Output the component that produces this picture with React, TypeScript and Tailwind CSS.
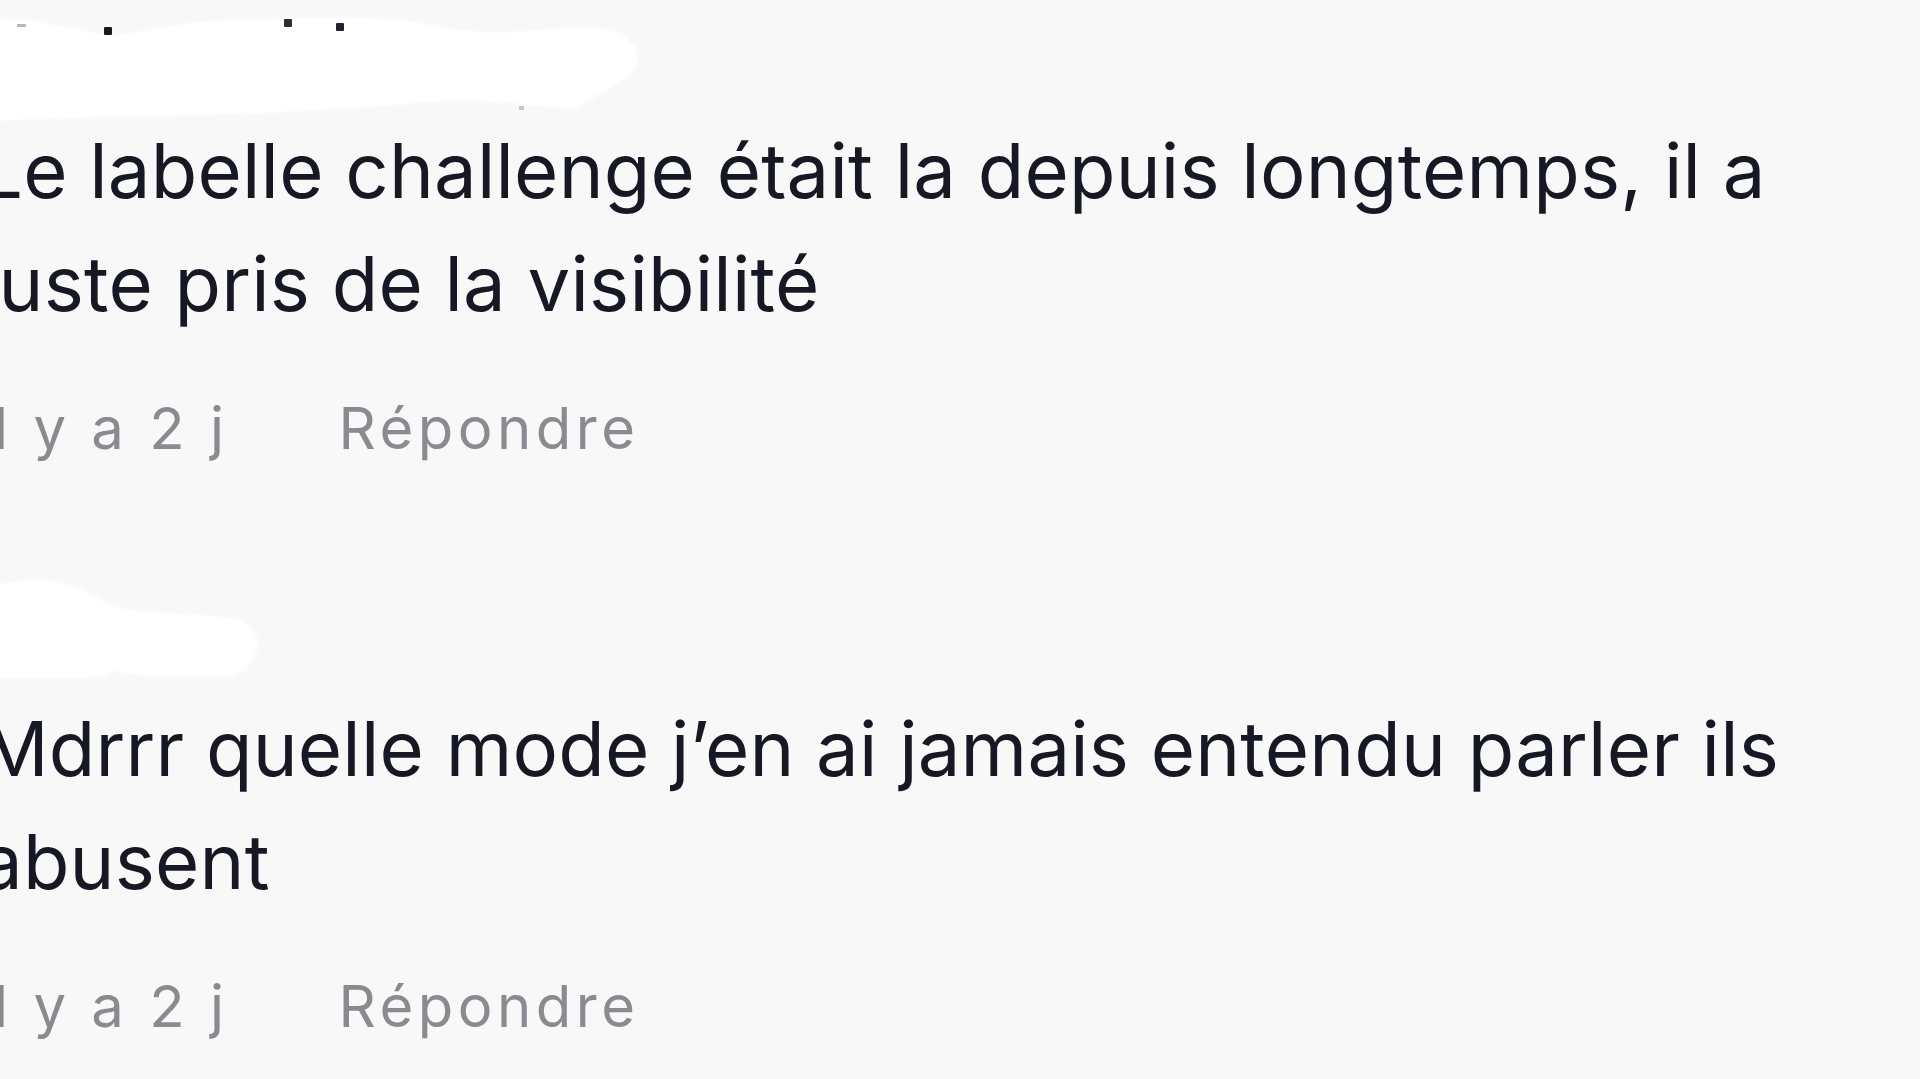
import React from "react";

const font = { fontFamily: "Inter, Lato, 'Open Sans', sans-serif" };

function Blob1() {
  return (
    <svg width="1920" height="114" viewBox="0 0 1920 114" className="block overflow-visible">
      <defs>
        <filter id="soft1" x="-5%" y="-20%" width="110%" height="140%">
          <feGaussianBlur stdDeviation="1.6" />
        </filter>
      </defs>
      <path
        filter="url(#soft1)"
        fill="#ffffff"
        d="M -10 18 C 20 18, 60 24, 100 34 C 130 38, 150 26, 200 22 C 260 18, 320 17, 360 18 C 420 18, 440 30, 480 32 C 520 34, 560 26, 600 28 C 625 32, 640 45, 637 62 C 634 80, 600 92, 580 106 C 560 112, 520 100, 450 101 C 400 104, 340 110, 260 113 C 160 116, 60 118, -10 121 Z"
      />
      <rect x="17" y="24" width="9" height="3" fill="#b8b8b8" />
      <rect x="104" y="27" width="8" height="8" rx="1" fill="#1a1a1a" />
      <rect x="284" y="19" width="8" height="8" rx="1" fill="#2a3038" />
      <rect x="336" y="23" width="8" height="8" rx="1" fill="#1f252c" />
      <rect x="519" y="106" width="5" height="4" fill="#c9c9c9" />
    </svg>
  );
}

function Blob2() {
  return (
    <svg width="1920" height="114" viewBox="0 578 1920 114" className="block overflow-visible">
      <defs>
        <filter id="soft2" x="-10%" y="-20%" width="120%" height="140%">
          <feGaussianBlur stdDeviation="1.6" />
        </filter>
      </defs>
      <path
        filter="url(#soft2)"
        fill="#ffffff"
        d="M -10 586 C 10 582, 30 579, 50 581 C 80 584, 95 600, 120 608 C 150 614, 200 614, 235 618 C 255 624, 260 640, 256 652 C 252 668, 240 676, 220 677 C 180 678, 140 676, 112 671 C 105 676, 95 678, 80 678 L -10 678 Z"
      />
    </svg>
  );
}

function Comment({ text, header }: { text: string; header: React.ReactNode }) {
  return (
    <div className="flex flex-col">
      <div className="h-[114px]">{header}</div>
      <p className="w-[1820px] -ml-[20px] text-[76px] leading-[113px] tracking-[0.2px] text-[#161823]" style={font}>
        {text}
      </p>
      <div className="-ml-[26px] mt-[53px] flex h-[70px] items-center text-[58px] leading-[70px] tracking-[4.5px] text-[#8a8b91]" style={font}>
        <span>Il y a 2 j</span>
        <span className="ml-[110px]">Répondre</span>
      </div>
    </div>
  );
}

export default function App() {
  return (
    <div className="h-[1079px] w-[1920px] overflow-hidden bg-[#f8f8f8]">
      <div className="flex flex-col gap-[115px]">
        <Comment
          header={<Blob1 />}
          text="Le labelle challenge était la depuis longtemps, il a juste pris de la visibilité"
        />
        <Comment
          header={<Blob2 />}
          text="Mdrrr quelle mode j’en ai jamais entendu parler ils abusent"
        />
      </div>
    </div>
  );
}
